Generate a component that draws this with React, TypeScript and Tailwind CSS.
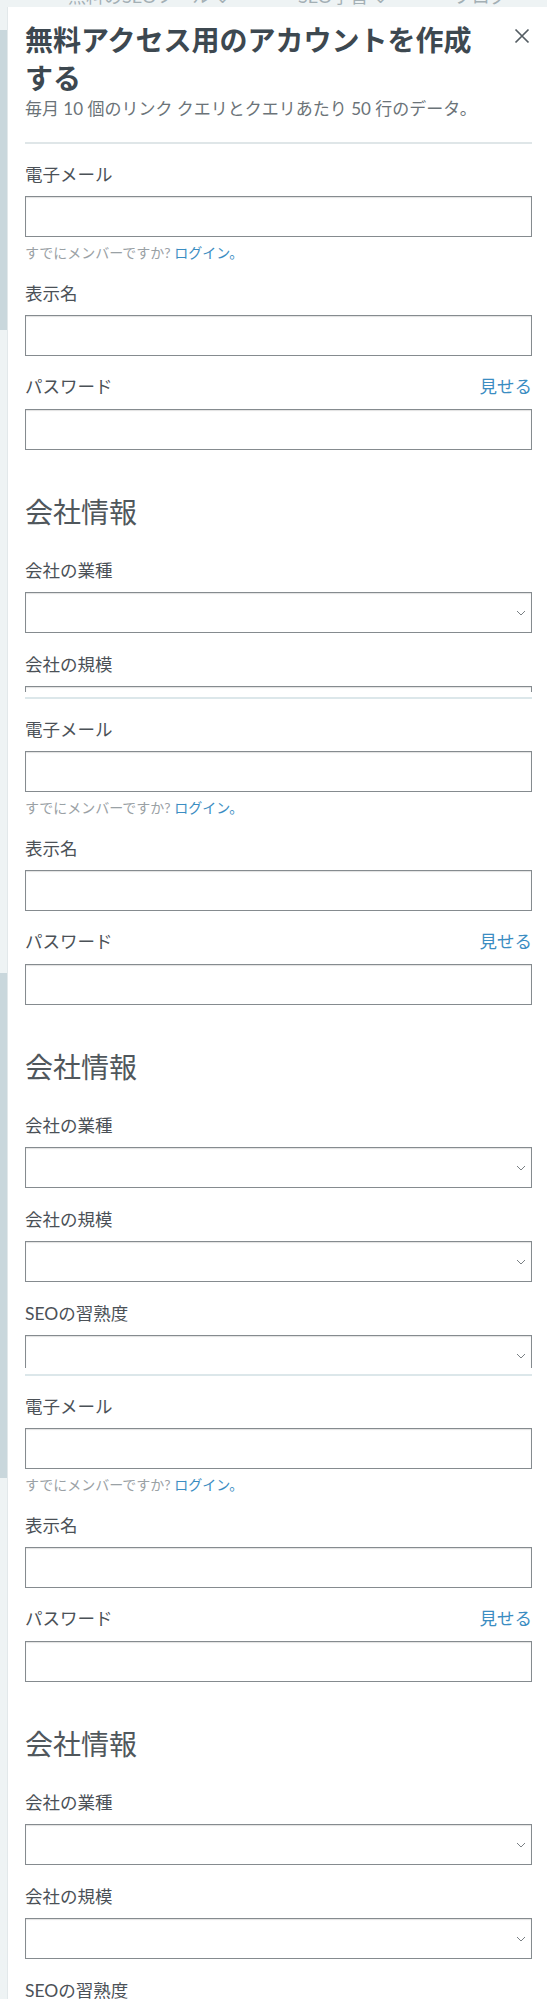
import React from "react";

const Chevron = () => (
  <svg width="10" height="6" viewBox="0 0 10 6" fill="none">
    <path d="M1 1 L5 5 L9 1" stroke="#7a8084" strokeWidth="1" />
  </svg>
);

const Label = ({ children }: { children: React.ReactNode }) => (
  <div className="text-[17.5px] leading-[24px] text-[#4b5157]">{children}</div>
);

const Input = ({ mt = "mt-[9px]" }: { mt?: string }) => (
  <div className={`${mt} h-[41px] border border-[#858b8f] bg-white shadow-[inset_0_1px_1px_rgba(0,0,0,0.12)]`} />
);

const Select = () => (
  <div className="mt-[9px] h-[41px] border border-[#858b8f] bg-white shadow-[inset_0_1px_1px_rgba(0,0,0,0.12)] flex items-center justify-end pr-[5px]">
    <Chevron />
  </div>
);

const FormBody = () => (
  <div className="pt-[19px] flex flex-col">
    <Label>電子メール</Label>
    <Input />
    <div className="mt-[7px] text-[14px] leading-[18px] text-[#9aa1a5]">
      すでにメンバーですか? <span className="text-[#3b8dc2]">ログイン。</span>
    </div>
    <div className="mt-[20px]">
      <Label>表示名</Label>
      <Input />
    </div>
    <div className="mt-[19px]">
      <div className="flex justify-between">
        <Label>パスワード</Label>
        <div className="text-[17.5px] leading-[24px] text-[#3b8dc2]">見せる</div>
      </div>
      <Input mt="mt-[10px]" />
    </div>
    <div className="mt-[45px] text-[28px] leading-[34px] text-[#50575c]">会社情報</div>
    <div className="mt-[30px]">
      <Label>会社の業種</Label>
      <Select />
    </div>
    <div className="mt-[20px]">
      <Label>会社の規模</Label>
      <Select />
    </div>
    <div className="mt-[20px]">
      <Label>SEOの習熟度</Label>
      <Select />
    </div>
  </div>
);

export default function App() {
  return (
    <div className="w-[547px] h-[1999px] overflow-hidden bg-[#eef3f4] flex flex-col font-['Lato','Noto_Sans_CJK_JP',sans-serif]">
      {/* background top strip */}
      <div className="h-[7px] shrink-0 overflow-hidden">
        <div className="-mt-[14px] flex text-[18px] leading-[20px] text-[#a3afb4] whitespace-nowrap">
          <span className="ml-[68px]">無料のSEOツール ⌄</span>
          <span className="ml-[68px]">SEO学習 ⌄</span>
          <span className="ml-[66px]">ブログ</span>
          <span className="ml-[42px]">ム</span>
        </div>
      </div>
      <div className="flex flex-1 min-h-0">
        {/* background left strip */}
        <div className="w-[7px] shrink-0 flex flex-col">
          <div className="h-[23px] bg-[#eef3f4]" />
          <div className="h-[300px] bg-[#c9d7dc]" />
          <div className="h-[643px] bg-[#eef3f4]" />
          <div className="h-[505px] bg-[#c9d7dc]" />
          <div className="flex-1 bg-[#eef3f4]" />
        </div>
        {/* modal */}
        <div className="flex-1 bg-white border-l border-[#e2e8ea] pl-[17px] pr-[15px] flex flex-col">
          {/* header */}
          <div className="pt-[14px] flex items-start">
            <h1 className="flex-1 text-[28px] leading-[38px] font-bold text-[#3d4850] pr-[30px]">
              無料アクセス用のアカウントを作成する
            </h1>
            <div className="mt-[7px] mr-[2px] w-[16px] h-[16px]">
              <svg width="16" height="16" viewBox="0 0 16 16" fill="none">
                <path d="M1.5 1.5 L14.5 14.5 M14.5 1.5 L1.5 14.5" stroke="#545d63" strokeWidth="1.7" />
              </svg>
            </div>
          </div>
          <div className="text-[17px] leading-[24px] text-[#6b7378]">
            毎月 10 個のリンク クエリとクエリあたり 50 行のデータ。
          </div>
          <div className="mt-[21px] h-[2px] bg-[#dfe6e8]" />
          {/* segment 1 */}
          <div className="h-[548px] overflow-hidden shrink-0">
            <FormBody />
          </div>
          <div className="h-[5px] shrink-0" />
          <div className="h-[2px] bg-[#dce7ea] shrink-0" />
          {/* segment 2 */}
          <div className="h-[669px] overflow-hidden shrink-0">
            <FormBody />
          </div>
          <div className="h-[6px] shrink-0" />
          <div className="h-[2px] bg-[#dce7ea] shrink-0" />
          {/* segment 3 */}
          <div className="flex-1 min-h-0 overflow-hidden">
            <FormBody />
          </div>
        </div>
      </div>
    </div>
  );
}
